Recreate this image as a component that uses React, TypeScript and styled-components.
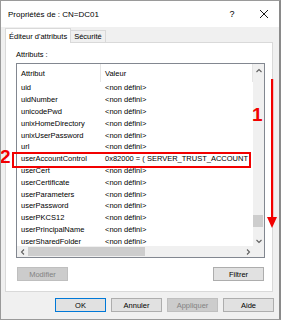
import React from "react";
import styled, { createGlobalStyle } from "styled-components";

const Global = createGlobalStyle`
  html, body { margin: 0; padding: 0; background: #fff; overflow: hidden; }
  body { font-family: "Liberation Sans", Arial, sans-serif; }
`;

const Window = styled.div`
  position: relative;
  box-sizing: border-box;
  width: 281px;
  height: 320px;
  background: #f0f0f0;
  border: 1px solid #9a9a9a;
  border-right: 2px solid #8a8a8a;
  display: flex;
  flex-direction: column;
  overflow: hidden;
`;

const TitleBar = styled.div`
  height: 26px;
  background: #fff;
  display: flex;
  align-items: center;
  padding-left: 7px;
  font-size: 8px;
  color: #000;
`;

const Title = styled.div`
  flex: 1;
`;

const TitleButton = styled.div<{ $w: number }>`
  width: ${(p) => p.$w}px;
  height: 26px;
  display: flex;
  align-items: center;
  justify-content: center;
  font-size: 9px;
`;

const TabStrip = styled.div`
  display: flex;
  align-items: flex-end;
  margin: 1px 0 0 4px;
  height: 15px;
  position: relative;
  z-index: 1;
`;

const Tab = styled.div<{ $active?: boolean }>`
  box-sizing: border-box;
  height: ${(p) => (p.$active ? 15 : 13)}px;
  padding: 0 3px;
  background: ${(p) => (p.$active ? "#fff" : "#f0f0f0")};
  border: 1px solid #d9d9d9;
  border-bottom: ${(p) => (p.$active ? "none" : "1px solid #d9d9d9")};
  margin-left: ${(p) => (p.$active ? 0 : -1)}px;
  font-size: 7.5px;
  display: flex;
  align-items: center;
  white-space: nowrap;
`;

const Panel = styled.div`
  box-sizing: border-box;
  margin: -1px 0 0 4px;
  width: 268px;
  height: 250px;
  background: #fff;
  border: 1px solid #d9d9d9;
  padding: 7px 0 0 10px;
  display: flex;
  flex-direction: column;
`;

const Label = styled.div`
  font-size: 7.5px;
  line-height: 10px;
  height: 10px;
  margin-bottom: 3px;
`;

const ListView = styled.div`
  box-sizing: border-box;
  width: 249px;
  height: 195px;
  border: 1px solid #828790;
  display: grid;
  grid-template-columns: 1fr 11px;
  grid-template-rows: 1fr 11px;
  background: #fff;
`;

const ListContent = styled.div`
  overflow: hidden;
  font-size: 7.5px;
`;

const HeaderRow = styled.div`
  display: flex;
  height: 18px;
  align-items: stretch;
`;

const HeaderCell = styled.div<{ $w: number }>`
  box-sizing: border-box;
  width: ${(p) => p.$w}px;
  flex: none;
  padding-left: 4px;
  display: flex;
  align-items: center;
  border-right: 1px solid #e5e5e5;
`;

const Row = styled.div`
  display: flex;
  height: 11.8px;
  align-items: center;
  white-space: nowrap;
`;

const Cell = styled.div<{ $w: number }>`
  box-sizing: border-box;
  width: ${(p) => p.$w}px;
  flex: none;
  padding-left: 4px;
`;

const VScroll = styled.div`
  background: #f0f0f0;
  display: flex;
  flex-direction: column;
  align-items: stretch;
`;

const ScrollBtn = styled.div<{ $h: number }>`
  height: ${(p) => p.$h}px;
  display: flex;
  align-items: center;
  justify-content: center;
  flex: none;
`;

const VTrack = styled.div`
  flex: 1;
  position: relative;
`;

const VThumb = styled.div`
  position: absolute;
  left: 0;
  right: 1px;
  bottom: 8px;
  height: 12px;
  background: #cdcdcd;
`;

const HScroll = styled.div`
  background: #f0f0f0;
  display: flex;
  align-items: stretch;
`;

const HBtn = styled.div`
  width: 11px;
  display: flex;
  align-items: center;
  justify-content: center;
  flex: none;
`;

const HThumb = styled.div`
  width: 117px;
  background: #cdcdcd;
  margin: 1px 0;
`;

const HTrack = styled.div`
  flex: 1;
`;

const Corner = styled.div`
  background: #f0f0f0;
`;

const PanelButtons = styled.div`
  display: flex;
  justify-content: space-between;
  width: 247px;
  margin-top: 9px;
  padding-left: 1px;
`;

const Button = styled.div<{ $disabled?: boolean; $default?: boolean }>`
  box-sizing: border-box;
  width: 51px;
  height: 14px;
  display: flex;
  align-items: center;
  justify-content: center;
  font-size: 7.5px;
  background: ${(p) => (p.$disabled ? "#cccccc" : "#e1e1e1")};
  border: 1px solid
    ${(p) => (p.$default ? "#0078d7" : p.$disabled ? "#bfbfbf" : "#adadad")};
  color: ${(p) => (p.$disabled ? "#838383" : "#000")};
`;

const BottomBar = styled.div`
  display: flex;
  justify-content: flex-end;
  gap: 5px;
  padding: 6px 5px 0 0;
`;

const RedText = styled.div<{ $x: number; $y: number }>`
  position: absolute;
  left: ${(p) => p.$x}px;
  top: ${(p) => p.$y}px;
  color: #f20000;
  font-weight: bold;
  font-size: 19px;
  line-height: 19px;
  font-family: "Liberation Sans", Arial, sans-serif;
`;

const RedBox = styled.div`
  position: absolute;
  left: 11px;
  top: 151px;
  width: 239px;
  height: 16px;
  box-sizing: border-box;
  border: 2px solid #f20000;
`;

const Arrow = styled.svg`
  position: absolute;
  left: 265px;
  top: 78px;
`;

const Chevron = ({ dir }: { dir: "up" | "down" | "left" | "right" }) => {
  const d = {
    up: "M1.5 5 L4 2.5 L6.5 5",
    down: "M1.5 3 L4 5.5 L6.5 3",
    left: "M5 1.5 L2.5 4 L5 6.5",
    right: "M3 1.5 L5.5 4 L3 6.5",
  }[dir];
  return (
    <svg width="8" height="8" viewBox="0 0 8 8">
      <path d={d} fill="none" stroke="#606060" strokeWidth="1.1" />
    </svg>
  );
};

const rows: [string, string][] = [
  ["uid", "<non défini>"],
  ["uidNumber", "<non défini>"],
  ["unicodePwd", "<non défini>"],
  ["unixHomeDirectory", "<non défini>"],
  ["unixUserPassword", "<non défini>"],
  ["url", "<non défini>"],
  ["userAccountControl", "0x82000 = ( SERVER_TRUST_ACCOUNT"],
  ["userCert", "<non défini>"],
  ["userCertificate", "<non défini>"],
  ["userParameters", "<non défini>"],
  ["userPassword", "<non défini>"],
  ["userPKCS12", "<non défini>"],
  ["userPrincipalName", "<non défini>"],
  ["userSharedFolder", "<non défini>"],
];

export default function App() {
  return (
    <>
      <Global />
      <Window>
        <TitleBar>
          <Title>Propriétés de : CN=DC01</Title>
          <TitleButton $w={34}>?</TitleButton>
          <TitleButton $w={30}>
            <svg width="10" height="10" viewBox="0 0 10 10">
              <path d="M1 1 L9 9 M9 1 L1 9" stroke="#000" strokeWidth="0.9" />
            </svg>
          </TitleButton>
        </TitleBar>
        <TabStrip>
          <Tab $active>Éditeur d'attributs</Tab>
          <Tab>Sécurité</Tab>
        </TabStrip>
        <Panel>
          <Label>Attributs :</Label>
          <ListView>
            <ListContent>
              <HeaderRow>
                <HeaderCell $w={84}>Attribut</HeaderCell>
                <HeaderCell $w={152}>Valeur</HeaderCell>
              </HeaderRow>
              {rows.map(([a, v]) => (
                <Row key={a}>
                  <Cell $w={84}>{a}</Cell>
                  <Cell $w={148}>{v}</Cell>
                </Row>
              ))}
            </ListContent>
            <VScroll>
              <ScrollBtn $h={13}>
                <Chevron dir="up" />
              </ScrollBtn>
              <VTrack>
                <VThumb />
              </VTrack>
              <ScrollBtn $h={11}>
                <Chevron dir="down" />
              </ScrollBtn>
            </VScroll>
            <HScroll>
              <HBtn>
                <Chevron dir="left" />
              </HBtn>
              <HThumb />
              <HTrack />
              <HBtn>
                <Chevron dir="right" />
              </HBtn>
            </HScroll>
            <Corner />
          </ListView>
          <PanelButtons>
            <Button $disabled>Modifier</Button>
            <Button>Filtrer</Button>
          </PanelButtons>
        </Panel>
        <BottomBar>
          <Button $default>OK</Button>
          <Button>Annuler</Button>
          <Button $disabled>Appliquer</Button>
          <Button>Aide</Button>
        </BottomBar>
        <RedBox />
        <RedText $x={251} $y={104}>1</RedText>
        <RedText $x={-1} $y={146}>2</RedText>
        <Arrow width="12" height="152" viewBox="0 0 12 152">
          <rect x="5" y="0" width="2.2" height="140" fill="#f20000" />
          <path d="M1 138 L11 138 L6 149 Z" fill="#f20000" />
        </Arrow>
      </Window>
    </>
  );
}
